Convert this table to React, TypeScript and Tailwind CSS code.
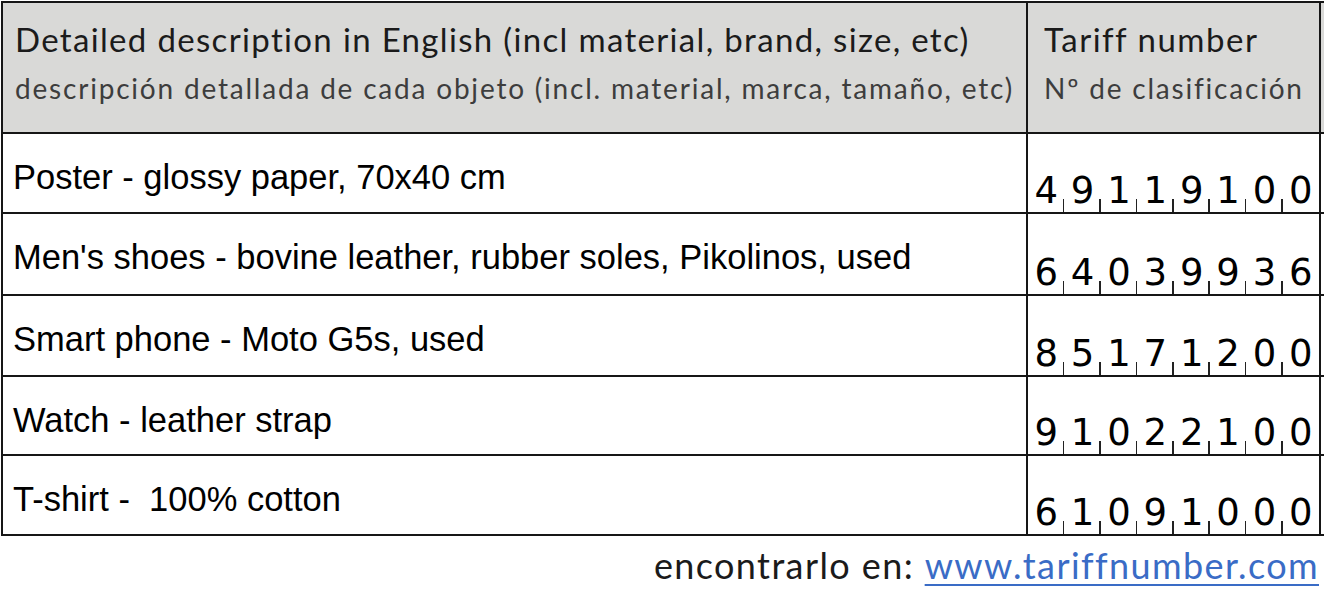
import React from "react";

const rows: { desc: string; code: string; h: string }[] = [
  { desc: "Poster - glossy paper, 70x40 cm", code: "49119100", h: "h-[80px]" },
  { desc: "Men's shoes - bovine leather, rubber soles, Pikolinos, used", code: "64039936", h: "h-[82px]" },
  { desc: "Smart phone - Moto G5s, used", code: "85171200", h: "h-[81px]" },
  { desc: "Watch - leather strap", code: "91022100", h: "h-[79px]" },
  { desc: "T-shirt -  100% cotton", code: "61091000", h: "h-[80px]" },
];

export default function App() {
  return (
    <div className="w-[1324px] h-[594px] bg-white overflow-hidden">
      <div className="pt-[1px] pl-[1px]">
        <div className="grid grid-cols-[1025px_293px_1fr] border-t-2 border-l-2 border-[#161616]">
          {/* header */}
          <div className="h-[131px] bg-[#d9d9d7] border-r-2 border-b-2 border-[#161616] pl-[12px] pt-[16px] font-['Lato',sans-serif] whitespace-nowrap">
            <div className="text-[33px] leading-[40px] text-[#1b1b1b] tracking-[1.33px]">
              Detailed description in English (incl material, brand, size, etc)
            </div>
            <div className="text-[28px] leading-[40px] mt-[9px] text-[#3d3d3d] tracking-[1.8px]">
              descripción detallada de cada objeto (incl. material, marca, tamaño, etc)
            </div>
          </div>
          <div className="h-[131px] bg-[#d9d9d7] border-r-2 border-b-2 border-[#161616] pl-[16px] pt-[16px] font-['Lato',sans-serif] whitespace-nowrap">
            <div className="text-[33px] leading-[40px] text-[#1b1b1b] tracking-[1.5px]">Tariff number</div>
            <div className="text-[28px] leading-[40px] mt-[9px] text-[#3d3d3d] tracking-[1.8px]">
              Nº de clasificación
            </div>
          </div>
          <div className="h-[131px] bg-[#d9d9d7] border-b-2 border-[#161616]"></div>

          {rows.map((r) => (
            <React.Fragment key={r.code}>
              <div
                className={`${r.h} border-r-2 border-b-2 border-[#161616] pl-[10px] pt-[26px] font-['Liberation_Sans',Arial,sans-serif] text-[34.5px] leading-[34px] text-black whitespace-pre`}
              >
                {r.desc}
              </div>
              <div className={`${r.h} border-r-2 border-b-2 border-[#161616] grid grid-cols-8`}>
                {r.code.split("").map((d, i) => (
                  <div
                    key={i}
                    className="relative flex items-end justify-center pb-[3px] font-['DejaVu_Sans',sans-serif] text-[37px] leading-[37px] text-black"
                  >
                    {d}
                    {i < 7 && (
                      <span className="absolute right-0 bottom-0 h-[13px] w-[1.5px] bg-[#222]"></span>
                    )}
                  </div>
                ))}
              </div>
              <div className={`${r.h} border-b-2 border-[#161616]`}></div>
            </React.Fragment>
          ))}
        </div>
      </div>
      <div className="flex justify-end pr-[5px] pt-[9px] font-['Lato',sans-serif] text-[36px] leading-[40px] tracking-[1.4px] text-[#1b1b1b] whitespace-nowrap">
        <span>encontrarlo en:&nbsp;</span>
        <span className="text-[#3a6cc6] underline underline-offset-[5px] decoration-[2px]">www.tariffnumber.com</span>
      </div>
    </div>
  );
}
